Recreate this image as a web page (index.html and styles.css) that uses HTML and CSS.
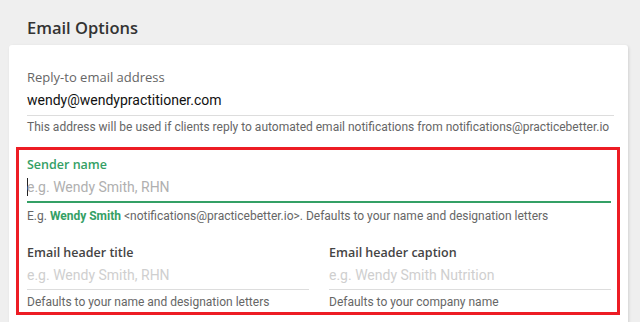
FILE: index.html
```html
<!DOCTYPE html>
<html lang="en">
<head>
  <meta charset="UTF-8">
  <title>Email Options</title>
  <link rel="stylesheet" href="styles.css">
</head>
<body>
  <h2 class="page-title">Email Options</h2>

  <div class="card">
    <div class="field reply-field">
      <label class="field-label">Reply-to email address</label>
      <div class="field-input">wendy@wendypractitioner.com</div>
      <p class="field-hint">This address will be used if clients reply to automated email notifications from notifications@practicebetter.io</p>
    </div>

    <!-- highlighted section -->
    <div class="highlight">
      <div class="field">
        <label class="field-label active">Sender name</label>
        <div class="field-input focused"><span class="caret"></span><span class="placeholder">e.g. Wendy Smith, RHN</span></div>
        <p class="field-hint">E.g. <strong class="sample-name">Wendy Smith</strong> &lt;notifications@practicebetter.io&gt;. Defaults to your name and designation letters</p>
      </div>

      <div class="field-row">
        <div class="field">
          <label class="field-label dark">Email header title</label>
          <div class="field-input"><span class="placeholder">e.g. Wendy Smith, RHN</span></div>
          <p class="field-hint">Defaults to your name and designation letters</p>
        </div>
        <div class="field">
          <label class="field-label dark">Email header caption</label>
          <div class="field-input"><span class="placeholder">e.g. Wendy Smith Nutrition</span></div>
          <p class="field-hint">Defaults to your company name</p>
        </div>
      </div>
    </div>
  </div>
</body>
</html>
```

FILE: styles.css
```css
/* Base */
body {
  margin: 0;
  background-color: #efefef;
  font-family: Roboto, "Liberation Sans", sans-serif;
  color: #222;
  overflow: hidden;
}

.page-title {
  margin: 0;
  padding: 18px 0 0 27px;
  height: 27px;
  font-family: "Open Sans", "DejaVu Sans", sans-serif;
  font-size: 16.5px;
  font-weight: 600;
  line-height: 20px;
  color: #333;
}

/* Card */
.card {
  margin-left: 9px;
  width: 604px;
  padding: 25px 8px 40px 7px;
  background: #fff;
  border-radius: 3px;
  box-shadow: 1px 1px 3px rgba(0, 0, 0, 0.12);
}

.reply-field {
  padding: 0 6px 0 11px;
  margin-bottom: 12px;
}

.field-label {
  display: block;
  font-family: "Open Sans", "DejaVu Sans", sans-serif;
  font-size: 13px;
  font-weight: 400;
  line-height: 16px;
  color: #666;
}

.reply-field .field-label {
  margin-top: -1px;
}

.field-label.active {
  font-size: 12.5px;
  color: #34a065;
  font-weight: 600;
}

.field-label.dark {
  font-size: 12.5px;
  color: #444;
  font-weight: 600;
}

.field-input {
  display: flex;
  align-items: center;
  height: 28px;
  border-bottom: 1px solid #ddd;
  font-size: 14px;
  color: #111;
}

.reply-field .field-input {
  height: 30px;
}

.field-input.focused {
  border-bottom: 2px solid #34a065;
}

.placeholder {
  color: #cfcfcf;
}

.focused .placeholder {
  color: #b0b0b0;
}

.caret {
  width: 1px;
  height: 18px;
  margin-right: -1px;
  background: #222;
}

.field-hint {
  margin: 4px 0 0;
  font-size: 12px;
  line-height: 16px;
  color: #666;
}

.reply-field .field-hint {
  margin-top: 3px;
}

.focused + .field-hint {
  margin-top: 5px;
}

.sample-name {
  color: #34a065;
}

/* Highlighted block */
.highlight {
  border: 3px solid #ed1c24;
  padding: 7px 6px 2px 8px;
}

.field-row {
  display: grid;
  grid-template-columns: 1fr 1fr;
  gap: 20px;
  margin-top: 21px;
}
```
